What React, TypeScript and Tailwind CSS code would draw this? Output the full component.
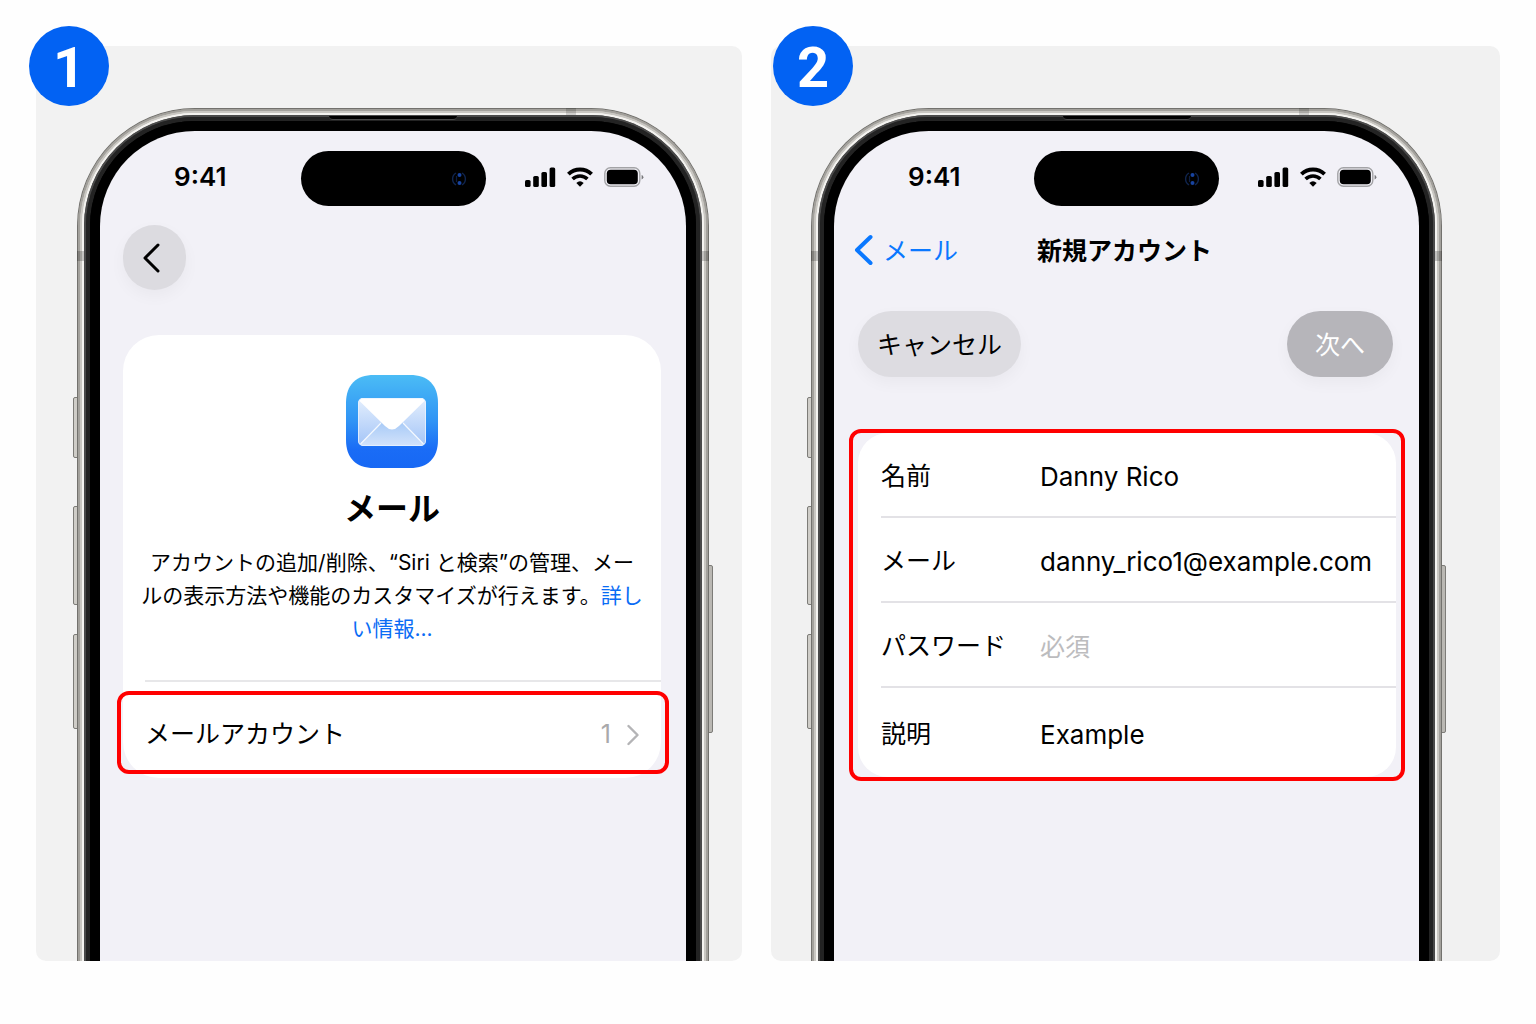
import type { ReactNode } from "react";

const SignalIcon = () => (
  <svg width="31" height="20" viewBox="0 0 31 20" aria-hidden="true">
    <rect x="0" y="13" width="5.6" height="7" rx="1.6" />
    <rect x="8.2" y="9" width="5.6" height="11" rx="1.6" />
    <rect x="16.4" y="5" width="5.6" height="15" rx="1.6" />
    <rect x="24.6" y="0.5" width="5.6" height="19.5" rx="1.6" />
  </svg>
);

const WifiIcon = () => (
  <svg width="26" height="20" viewBox="0 0 26 20" aria-hidden="true">
    <path d="M1.4 7.2A16.6 16.6 0 0 1 24.6 7.2" fill="none" stroke="#000" strokeWidth="3.9" />
    <path d="M5.6 12A10.4 10.4 0 0 1 20.4 12" fill="none" stroke="#000" strokeWidth="3.5" />
    <path d="M13 19.8L9.3 16Q13 12.6 16.7 16Z" />
  </svg>
);

const BatteryIcon = () => (
  <svg width="40" height="20" viewBox="0 0 40 20" aria-hidden="true">
    <rect x="0.8" y="0.8" width="35" height="18.4" rx="5.6" fill="none" stroke="#a3a3a6" strokeWidth="1.4" />
    <rect x="2.8" y="2.8" width="31" height="14.4" rx="3.8" />
    <path d="M37.6 8Q39.4 8.6 39.4 10.2Q39.4 11.8 37.6 12.4Z" fill="#77777a" />
  </svg>
);

const MailIcon = () => (
  <svg width="92" height="93" viewBox="0 0 92 93" aria-hidden="true">
    <defs>
      <linearGradient id="tile" x1="0" y1="0" x2="0" y2="1">
        <stop offset="0" stopColor="#4bbcf5" />
        <stop offset="0.5" stopColor="#2f93f5" />
        <stop offset="0.8" stopColor="#1a6cf6" />
        <stop offset="1" stopColor="#1768f4" />
      </linearGradient>
      <linearGradient id="envelope" x1="0" y1="0" x2="0" y2="1">
        <stop offset="0" stopColor="#e4effd" />
        <stop offset="1" stopColor="#a3c4f7" />
      </linearGradient>
      <linearGradient id="fold" x1="0" y1="0" x2="0" y2="1">
        <stop offset="0" stopColor="#a9cbf7" />
        <stop offset="1" stopColor="#d3e3fb" />
      </linearGradient>
    </defs>
    <path
      d="M28 0H64C82 0 92 10 92 28V65C92 83 82 93 64 93H28C10 93 0 83 0 65V28C0 10 10 0 28 0Z"
      fill="url(#tile)"
    />
    <rect x="12" y="23" width="68" height="48" rx="5" fill="url(#envelope)" />
    <path d="M14.5 69.5L35 48H57L77.5 69.5Q76 71 74 71H18Q16 71 14.5 69.5Z" fill="url(#fold)" />
    <path d="M14.5 69L35 48M77.5 69L57 48" stroke="#f5f9ff" strokeWidth="1.2" fill="none" />
    <path d="M13 25.5Q14.5 23 17 23H75Q77.5 23 79 25.5L53 51Q46 58 39 51Z" fill="#fff" />
    <rect x="12.5" y="23.5" width="67" height="47" rx="4.5" fill="none" stroke="#e8f2ff" strokeOpacity="0.8" />
  </svg>
);

const StatusBar = () => (
  <div className="grid grid-cols-[1fr_185px_1fr] items-center">
    <span className="pb-1 pl-[74px] text-[26px] leading-8 font-semibold">9:41</span>
    <div className="flex h-[55px] items-center justify-end rounded-full bg-black pr-[19px]">
      <svg width="16" height="16" viewBox="0 0 16 16" aria-hidden="true">
        <path d="M5 2A7 7 0 0 0 5 14M11 2A7 7 0 0 1 11 14" fill="none" stroke="#10254f" strokeWidth="1.4" />
        <path d="M5.5 5V11" stroke="#0d1d40" strokeWidth="1.2" />
        <circle cx="8.5" cy="4" r="2" fill="#1743a0" />
        <circle cx="8.5" cy="12" r="2" fill="#1743a0" />
      </svg>
    </div>
    <div className="flex items-center justify-end gap-[11px] pr-[42px] pb-1">
      <SignalIcon />
      <WifiIcon />
      <BatteryIcon />
    </div>
  </div>
);

const Phone = ({ children }: { children: ReactNode }) => (
  <div className="relative w-full">
    {/* side keys */}
    <div className="absolute top-[289px] -left-1 h-[61px] w-[5px] rounded-l-xs border border-[#7d7c78] bg-[#cfcdc8]" />
    <div className="absolute top-[398px] -left-1 h-[99px] w-[5px] rounded-l-xs border border-[#7d7c78] bg-[#cfcdc8]" />
    <div className="absolute top-[526px] -left-1 h-[95px] w-[5px] rounded-l-xs border border-[#7d7c78] bg-[#cfcdc8]" />
    <div className="absolute top-[457px] -right-1 h-[168px] w-[5px] rounded-r-xs border border-[#7d7c78] bg-[#bab8b3]" />

    {/* metal band */}
    <div className="relative rounded-t-[118px] border-x border-t border-[#73726e] bg-[#a3a19c]">
      <div className="rounded-t-[117px] border-x-2 border-t-2 border-[#a3a19c] bg-[#c9c7c2]">
        <div className="rounded-t-[115px] border-x-2 border-t-2 border-[#c9c7c2] bg-[#f4f3f0]">
          <div className="rounded-t-[113px] border-x-2 border-t-2 border-[#f4f3f0] bg-[#4a4a4a]">
            {/* glass edge */}
            <div className="rounded-t-[111px] border-x-2 border-t-2 border-[#4a4a4a] bg-[#232323]">
              <div className="rounded-t-[109px] border-x-4 border-t-4 border-[#232323] bg-black">
                <div className="rounded-t-[105px] border-x-[10px] border-t-[10px] border-black bg-black">
                  <div className="min-h-[830px] rounded-t-[95px] bg-[#f2f1f7] pt-5">
                    <StatusBar />
                    {children}
                  </div>
                </div>
              </div>
            </div>
          </div>
        </div>
      </div>
    </div>

    {/* antenna lines and earpiece */}
    <div className="absolute top-[143px] left-0 h-[10px] w-[7px] bg-black/20" />
    <div className="absolute top-[143px] right-0 h-[10px] w-[7px] bg-black/20" />
    <div className="absolute top-0 right-[133px] h-[7px] w-[10px] bg-black/15" />
    <div className="absolute top-2 left-[252px] h-1 w-32 rounded-b-sm border-b border-[#4a4a4a] bg-black" />
  </div>
);

const Badge = ({ children }: { children: ReactNode }) => (
  <div className="flex size-20 items-center justify-center rounded-full bg-[#0262f3] pt-1 font-[Roboto,sans-serif] text-[56px] leading-none font-bold text-white">
    {children}
  </div>
);

const fields = [
  { id: "name", label: "名前", type: "text", value: "Danny Rico" },
  { id: "email", label: "メール", type: "email", value: "danny_rico1@example.com" },
  { id: "password", label: "パスワード", type: "password", placeholder: "必須" },
  { id: "description", label: "説明", type: "text", value: "Example" },
];

const MailSettings = () => (
  <div className="pr-[25px] pl-[23px]">
    <button
      type="button"
      aria-label="戻る"
      className="mt-[19px] flex h-[65px] w-[63px] items-center justify-center rounded-full bg-[#dcdbe0] pr-2 shadow-[0_6px_16px_rgba(0,0,0,0.04)]"
    >
      <svg width="18" height="30" viewBox="0 0 18 30" fill="none" aria-hidden="true">
        <path d="M16 2L3 15L16 28" stroke="#000" strokeWidth="3" strokeLinecap="round" strokeLinejoin="round" />
      </svg>
    </button>

    <div className="mt-[45px] rounded-[36px] bg-white pt-10 pb-1">
      <div className="flex flex-col items-center">
        <MailIcon />
        <h1 className="mt-[18px] text-[32px] leading-[46px] font-bold">メール</h1>
        <p className="mt-[14px] text-center text-[21px] leading-[33px] whitespace-nowrap">
          アカウントの追加/削除、“Siri と検索”の管理、メー
          <br />
          ルの表示方法や機能のカスタマイズが行えます。
          <a href="#details" className="text-[#0a6cf5]">
            詳し
            <br />
            い情報...
          </a>
        </p>
      </div>
      <div className="mt-[35px] ml-[22px] h-0.5 bg-[#e7e7e9]" />
      <button
        type="button"
        className="mt-[9px] -mr-2 -ml-1.5 flex h-[83px] w-[calc(100%+14px)] items-center rounded-xl border-4 border-[#ff0000] pt-1 pr-[26px] pl-6 text-[25px]"
      >
        <span>メールアカウント</span>
        <span className="mr-4 ml-auto text-[#a9a9ab]">1</span>
        <svg width="12" height="22" viewBox="0 0 12 22" fill="none" aria-hidden="true">
          <path d="M1.5 2L10.5 11L1.5 20" stroke="#b4b4b6" strokeWidth="2.4" strokeLinecap="round" strokeLinejoin="round" />
        </svg>
      </button>
    </div>
  </div>
);

const NewAccount = () => (
  <div>
    <div className="mt-[22px] grid h-11 grid-cols-[1fr_auto_1fr] items-center pl-5 text-[25px]">
      <a href="#mail" className="flex items-center gap-[10px] text-[#0a78ff]">
        <svg width="19" height="32" viewBox="0 0 19 32" fill="none" aria-hidden="true">
          <path d="M16.5 3L3 16L16.5 29" stroke="#0a78ff" strokeWidth="4" strokeLinecap="round" strokeLinejoin="round" />
        </svg>
        <span className="pt-1">メール</span>
      </a>
      <h1 className="pt-1 pr-6 font-bold">新規アカウント</h1>
    </div>

    <div className="mt-[39px] flex justify-between pr-[26px] pl-6 text-[25px]">
      <button
        type="button"
        className="h-[66px] w-[163px] rounded-full bg-[#dddce1] pt-1 shadow-[0_6px_16px_rgba(0,0,0,0.04)]"
      >
        キャンセル
      </button>
      <button
        type="button"
        className="h-[66px] w-[106px] rounded-full bg-[#b6b5ba] pt-1 text-white shadow-[0_6px_16px_rgba(0,0,0,0.04)]"
      >
        次へ
      </button>
    </div>

    <form className="mt-[52px] mr-[14px] ml-[15px] rounded-xl border-4 border-[#ff0000] px-[5px]">
      <div className="rounded-[30px] bg-white pl-[23px]">
        {fields.map((field) => (
          <div
            key={field.id}
            className="flex h-[85px] items-center border-b-2 border-[#e3e2e6] pt-1 last:h-[89px] last:border-b-0"
          >
            <label htmlFor={field.id} className="w-[159px] shrink-0 text-[25px]">
              {field.label}
            </label>
            <input
              id={field.id}
              type={field.type}
              defaultValue={field.value}
              placeholder={field.placeholder}
              className="min-w-0 flex-1 bg-transparent text-[26px] outline-none placeholder:text-[25px] placeholder:text-[#bcbcbe]"
            />
          </div>
        ))}
      </div>
    </form>
  </div>
);

export default function App() {
  return (
    <main className="min-h-screen bg-[#fefefe] px-9 pt-[46px] pb-[63px] font-['Inter','Noto_Sans_CJK_JP',sans-serif] text-black">
      <div className="grid grid-cols-[minmax(0,706fr)_minmax(0,729fr)] gap-[29px]">
        <section className="relative rounded-[10px] bg-[#f2f2f2] pt-[62px] pr-[33px] pl-[41px]">
          <div className="absolute -top-5 -left-[7px]">
            <Badge>1</Badge>
          </div>
          <Phone>
            <MailSettings />
          </Phone>
        </section>
        <section className="relative rounded-[10px] bg-[#f1f1f1] pt-[62px] pr-[58px] pl-10">
          <div className="absolute -top-5 left-0.5">
            <Badge>2</Badge>
          </div>
          <Phone>
            <NewAccount />
          </Phone>
        </section>
      </div>
    </main>
  );
}
